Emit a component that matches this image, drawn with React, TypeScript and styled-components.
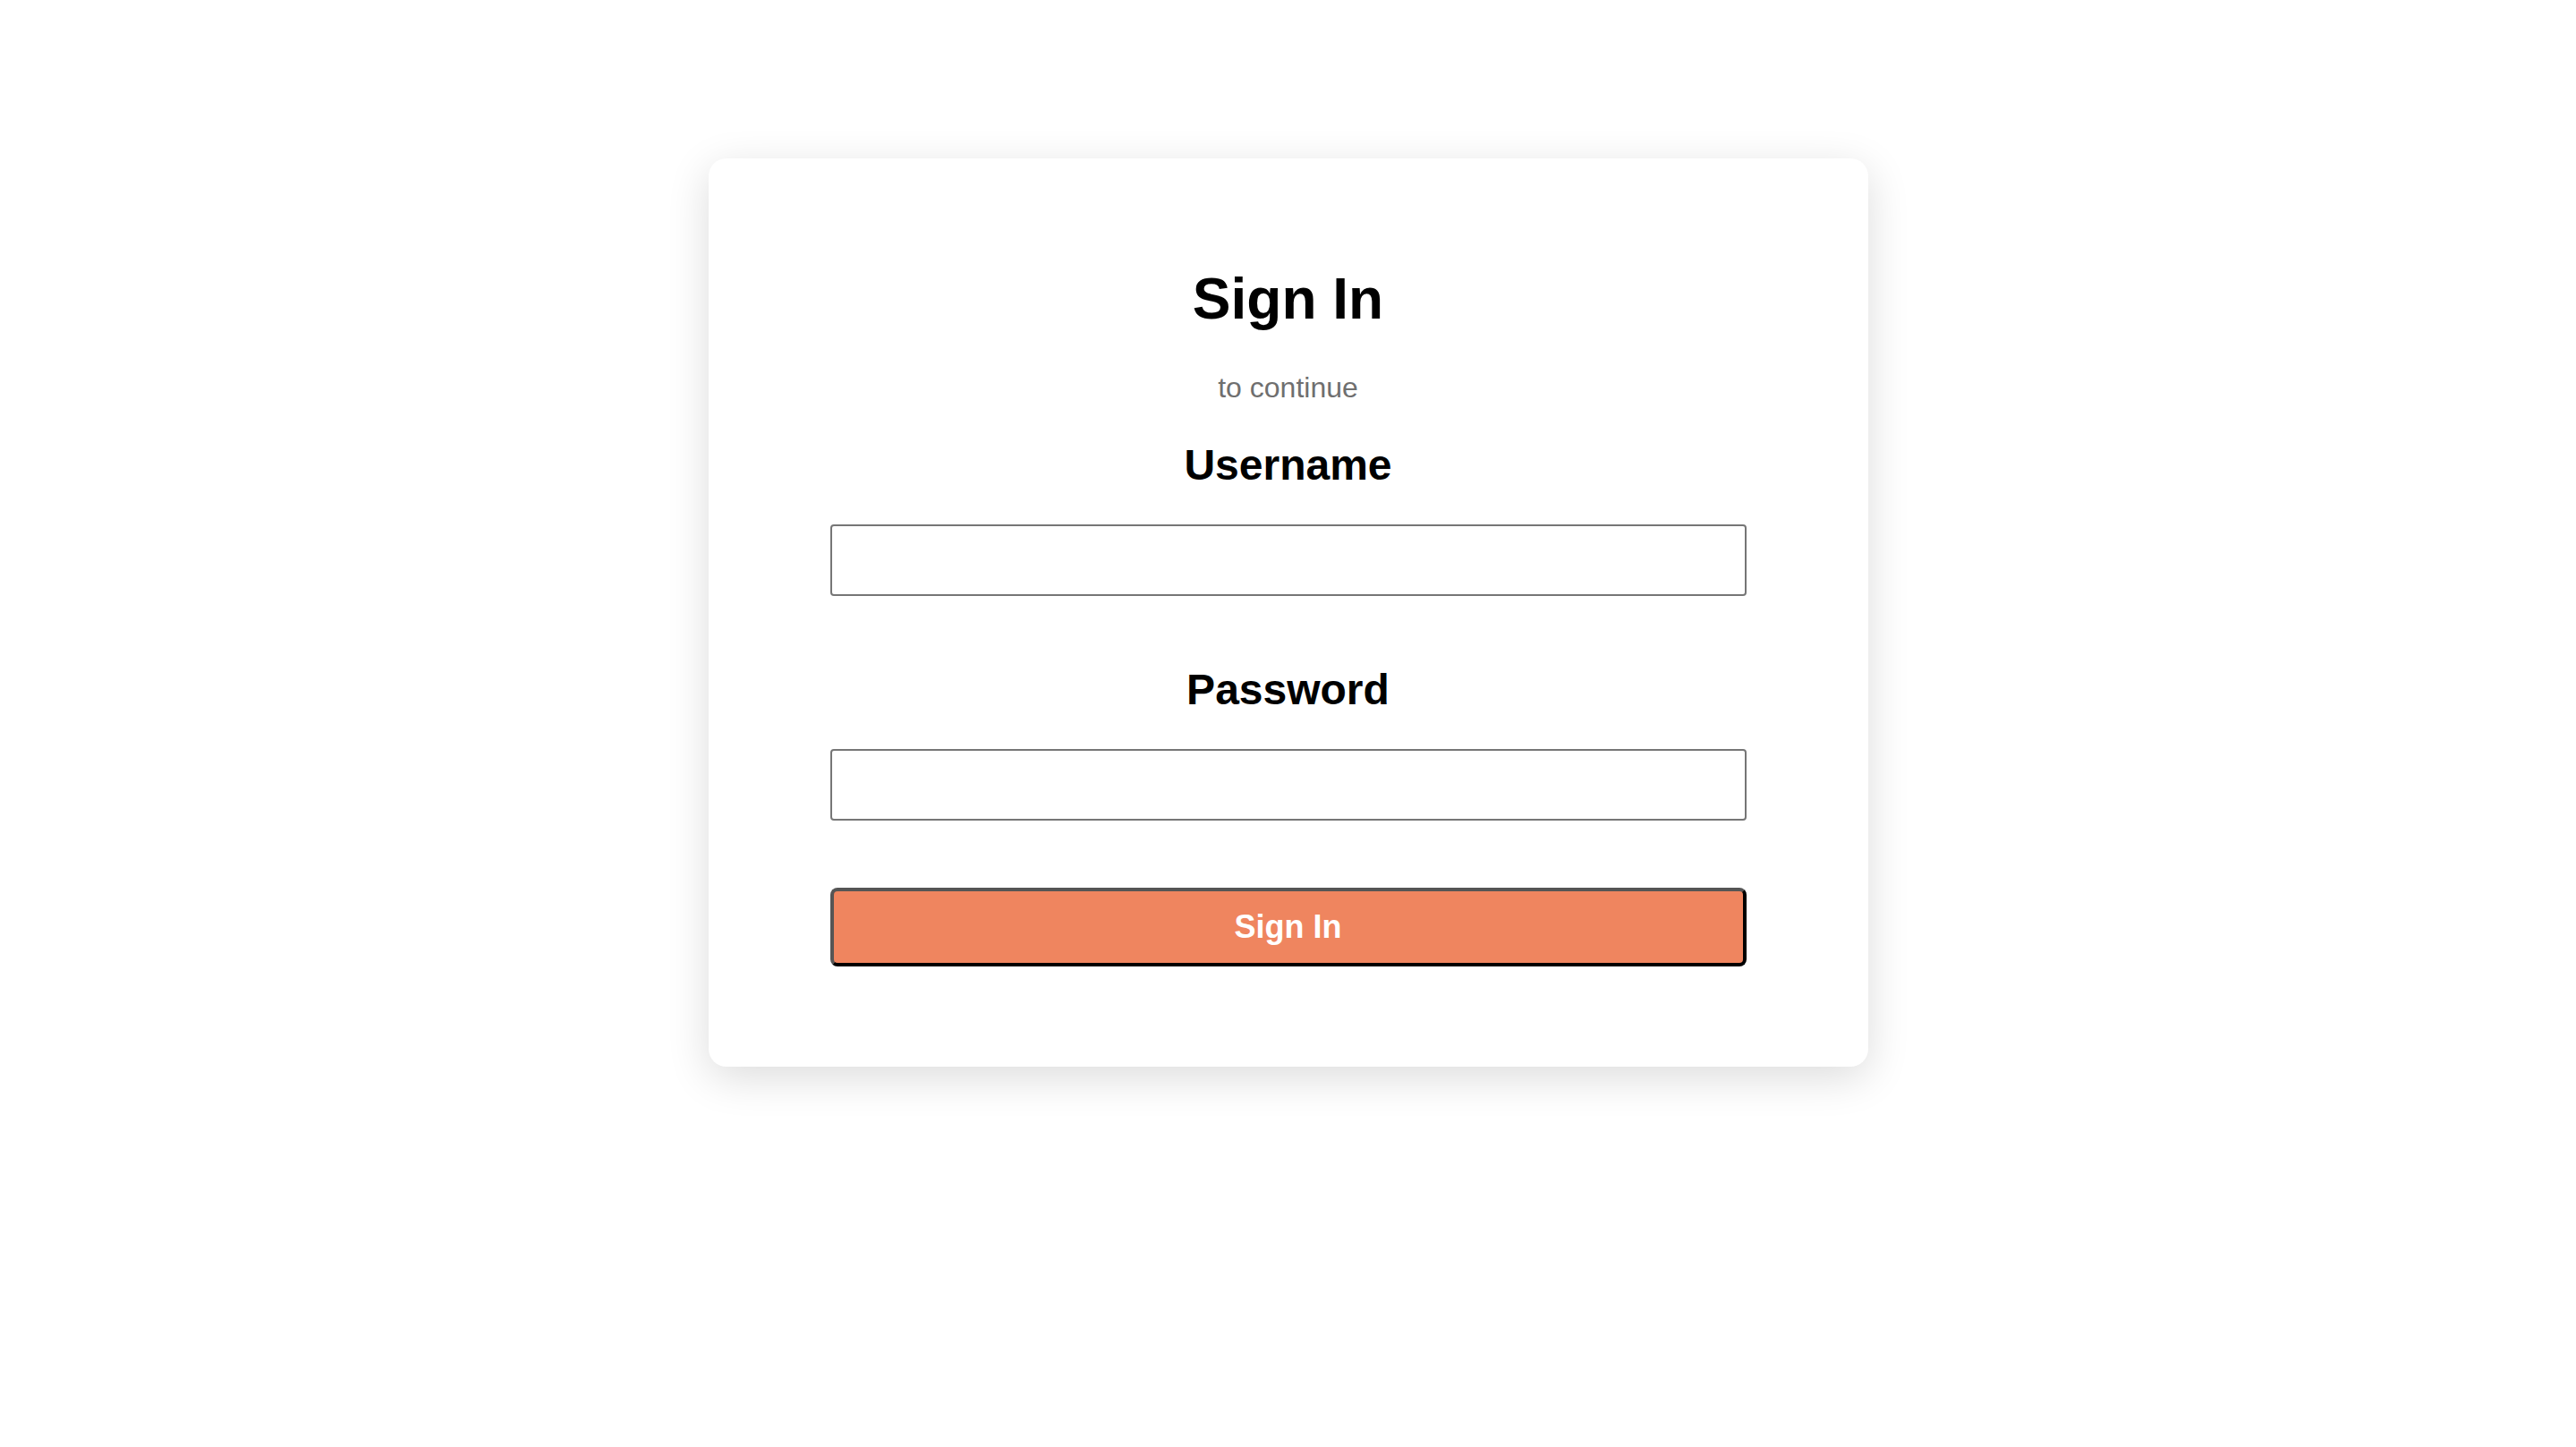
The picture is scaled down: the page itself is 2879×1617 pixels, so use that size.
import React from "react";
import styled, { createGlobalStyle } from "styled-components";

const GlobalStyle = createGlobalStyle`
  html, body {
    margin: 0;
    padding: 0;
    background: #ffffff;
    font-family: "Liberation Sans", Arial, Helvetica, sans-serif;
  }
  * { box-sizing: border-box; }
`;

const Page = styled.main`
  display: flex;
  justify-content: center;
  padding-top: 177px;
  min-height: 1617px;
`;

const Card = styled.section`
  width: 1296px;
  background: #ffffff;
  border-radius: 20px;
  box-shadow: 0 12px 48px rgba(0, 0, 0, 0.14);
  padding: 120px 0 112px;
  display: flex;
  flex-direction: column;
  align-items: center;
  align-self: flex-start;
`;

const Title = styled.h1`
  margin: 0;
  font-size: 64px;
  line-height: 74px;
  font-weight: 700;
  color: #000;
`;

const Subtitle = styled.p`
  margin: 44px 0 0;
  font-size: 32px;
  line-height: 37px;
  color: #6f6f6f;
`;

const Form = styled.form`
  margin-top: 41px;
  width: 1024px;
  display: flex;
  flex-direction: column;
`;

const Field = styled.div`
  display: flex;
  flex-direction: column;
  gap: 40px;
  & + & {
    margin-top: 78px;
  }
`;

const Label = styled.label`
  text-align: center;
  font-size: 48px;
  line-height: 53px;
  font-weight: 700;
  color: #000;
`;

const Input = styled.input`
  width: 100%;
  height: 80px;
  border: 2px solid #767676;
  border-radius: 4px;
  padding: 0 12px;
  font-size: 32px;
  font-family: inherit;
  background: #fff;
  outline: none;
`;

const Button = styled.button`
  margin-top: 75px;
  width: 100%;
  height: 88px;
  border-width: 4px;
  border-style: solid;
  border-color: #555555 #000000 #000000 #555555;
  border-radius: 8px;
  background: #ef855f;
  color: #ffffff;
  font-family: inherit;
  font-size: 36px;
  font-weight: 700;
  cursor: pointer;
`;

export default function App() {
  return (
    <>
      <GlobalStyle />
      <Page>
        <Card>
          <Title>Sign In</Title>
          <Subtitle>to continue</Subtitle>
          <Form onSubmit={(e) => e.preventDefault()}>
            <Field>
              <Label htmlFor="username">Username</Label>
              <Input id="username" type="text" />
            </Field>
            <Field>
              <Label htmlFor="password">Password</Label>
              <Input id="password" type="password" />
            </Field>
            <Button type="submit">Sign In</Button>
          </Form>
        </Card>
      </Page>
    </>
  );
}
